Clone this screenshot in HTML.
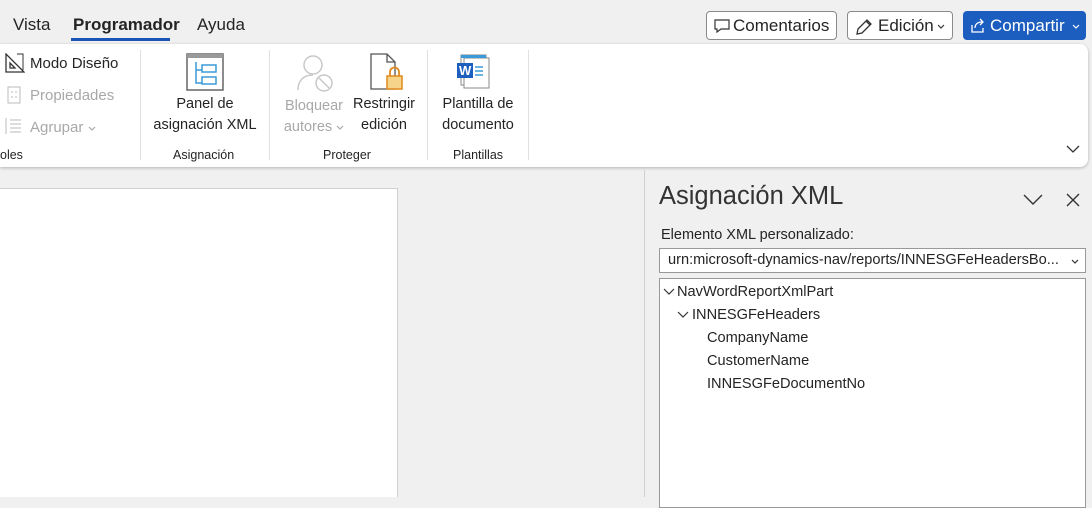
<!DOCTYPE html>
<html><head><style>
*{margin:0;padding:0;box-sizing:border-box}
body{width:1092px;height:497px;overflow:hidden;background:#f0f0f0;font-family:"Liberation Sans",sans-serif;color:#242424;position:relative}
.a{position:absolute;white-space:nowrap}
.tab{font-size:17px;top:15px}
.btn{position:absolute;top:11px;height:29px;border:1px solid #8a8a8a;border-radius:4px;background:#fff;font-size:17px;line-height:27px}
.rib{position:absolute;left:0;top:44px;width:1088px;height:123px;background:#fff;border-radius:0 8px 8px 0;box-shadow:0 1px 3px rgba(0,0,0,.25)}
.sep{position:absolute;top:6px;width:1px;height:110px;background:#e0e0e0}
.t{font-size:14.5px;text-align:center;line-height:21px}
.g{font-size:12.5px;top:104px}
.dis{color:#a8a8a8}
.cv{display:inline-block;vertical-align:middle;margin-left:3px}
</style></head><body>
<div class="a tab" style="left:13px">Vista</div>
<div class="a tab" style="left:73px;font-weight:bold">Programador</div>
<div class="a" style="left:71px;top:38px;width:99px;height:3px;background:#1a55b5"></div>
<div class="a tab" style="left:197px">Ayuda</div>

<div class="btn" style="left:706px;width:131px;padding-left:26px">Comentarios
<svg class="a" style="left:7px;top:7px" width="16" height="14"><path d="M1 1h14v9H7l-4 3v-3H1z" fill="none" stroke="#333" stroke-width="1.2"/></svg></div>
<div class="btn" style="left:847px;width:106px;padding-left:30px">Edición<svg class="cv" width="8" height="5"><path d="M1 1l3 3 3-3" fill="none" stroke="#333" stroke-width="1.2"/></svg>
<svg class="a" style="left:6px;top:5px" width="20" height="20"><path d="M3 17l1-5L13 3l4 4-9 9z M12 4l4 4" fill="none" stroke="#333" stroke-width="1.3"/></svg></div>
<div class="btn" style="left:963px;width:123px;padding-left:26px;background:#1b5ebf;border-color:#1b5ebf;color:#fff">Compartir<svg class="cv" style="margin-left:7px" width="8" height="5"><path d="M1 1l3 3 3-3" fill="none" stroke="#fff" stroke-width="1.2"/></svg>
<svg class="a" style="left:6px;top:6px" width="16" height="16"><path d="M2 7v7h11v-4 M5 10c0-4 3-6 7-6 M10 1l3 3-3 3" fill="none" stroke="#fff" stroke-width="1.3"/></svg></div>

<div class="rib">
<svg class="a" style="left:5px;top:9px" width="20" height="20"><path d="M1 1v18h18z M5 10v5h5z" fill="none" stroke="#333" stroke-width="1.3"/><path d="M12 1h6v16" fill="none" stroke="#333"/></svg>
<div class="a" style="left:30px;top:11px;font-size:15px">Modo Diseño</div>
<svg class="a" style="left:7px;top:42px" width="14" height="18"><rect x="1" y="1" width="12" height="16" fill="none" stroke="#bbb"/><path d="M4 6h2M8 6h2M4 11h2M8 11h2" stroke="#bbb"/></svg>
<div class="a dis" style="left:30px;top:43px;font-size:15px">Propiedades</div>
<svg class="a" style="left:5px;top:73px" width="18" height="18"><path d="M1 1v16M5 3h11M5 7h11M5 11h11M5 15h11" stroke="#bbb"/></svg>
<div class="a dis" style="left:30px;top:75px;font-size:15px">Agrupar<svg class="cv" style="margin-left:5px" width="8" height="5"><path d="M1 1l3 3 3-3" fill="none" stroke="#aaa" stroke-width="1.2"/></svg></div>
<div class="a g" style="left:0">oles</div>
<div class="sep" style="left:140px"></div>
<svg class="a" style="left:186px;top:9px" width="38" height="38"><rect x="1" y="1" width="36" height="36" fill="#fff" stroke="#666" stroke-width="1.5"/><rect x="1" y="1" width="36" height="4" fill="#999"/><path d="M10 9v21h6M10 17h6" fill="none" stroke="#3c9ad8" stroke-width="1.5"/><rect x="16" y="12" width="14" height="7" fill="none" stroke="#3c9ad8" stroke-width="1.5"/><rect x="16" y="24" width="14" height="7" fill="none" stroke="#3c9ad8" stroke-width="1.5"/></svg>
<div class="a t" style="left:146px;top:50px;width:118px">Panel de<br>asignación XML</div>
<div class="a g" style="left:173px">Asignación</div>
<div class="sep" style="left:269px"></div>
<svg class="a" style="left:296px;top:9px" width="40" height="40"><circle cx="17" cy="12" r="9" fill="none" stroke="#c8c8c8" stroke-width="1.5"/><path d="M2 37c0-10 6-15 15-15" fill="none" stroke="#c8c8c8" stroke-width="1.5"/><circle cx="28" cy="30" r="8" fill="none" stroke="#c8c8c8" stroke-width="1.5"/><path d="M23 25l10 10" stroke="#c8c8c8" stroke-width="1.5"/></svg>
<div class="a t dis" style="left:278px;top:52px;width:72px">Bloquear<br>autores<svg class="cv" style="margin-left:4px" width="8" height="5"><path d="M1 1l3 3 3-3" fill="none" stroke="#aaa" stroke-width="1.2"/></svg></div>
<svg class="a" style="left:368px;top:9px" width="40" height="40"><path d="M3 1h16l8 8v27H3z M19 1v8h8" fill="#fff" stroke="#555" stroke-width="1.3"/><rect x="19" y="23" width="15" height="13" fill="#f6d58a" stroke="#e08a1e" stroke-width="1.5"/><path d="M22 23v-4a4.5 4.5 0 0 1 9 0v4" fill="none" stroke="#e08a1e" stroke-width="1.8"/></svg>
<div class="a t" style="left:348px;top:50px;width:72px">Restringir<br>edición</div>
<div class="a g" style="left:323px">Proteger</div>
<div class="sep" style="left:427px"></div>
<svg class="a" style="left:455px;top:9px" width="40" height="40"><rect x="6" y="2" width="25" height="30" fill="#fff" stroke="#888"/><rect x="9" y="5" width="25" height="30" fill="#fff" stroke="#888"/><rect x="6" y="2" width="25" height="3" fill="#3c9ad8"/><rect x="2" y="10" width="16" height="15" fill="#1d5fbf"/><text x="4" y="22" font-size="13" font-weight="bold" fill="#fff" font-family="Liberation Sans">W</text><path d="M20 14h8M20 18h8M20 22h8" stroke="#3c9ad8" stroke-width="1.5"/></svg>
<div class="a t" style="left:434px;top:50px;width:88px">Plantilla de<br>documento</div>
<div class="a g" style="left:453px">Plantillas</div>
<div class="sep" style="left:528px"></div>
<svg class="a" style="left:1066px;top:101px" width="14" height="9"><path d="M1 1l6 6 6-6" fill="none" stroke="#333" stroke-width="1.3"/></svg>
</div>

<div class="a" style="left:0;top:188px;width:398px;height:309px;background:#fff;border-right:1px solid #d0d0d0;border-top:1px solid #d0d0d0"></div>
<div class="a" style="left:644px;top:170px;width:1px;height:327px;background:#d0d0d0"></div>

<div class="a" style="left:659px;top:182px;font-size:25.5px;color:#333">Asignación XML</div>
<svg class="a" style="left:1023px;top:194px" width="20" height="12"><path d="M1 1l9 9 9-9" fill="none" stroke="#333" stroke-width="1.4"/></svg>
<svg class="a" style="left:1066px;top:193px" width="14" height="14"><path d="M1 1l12 12M13 1L1 13" stroke="#333" stroke-width="1.4"/></svg>
<div class="a" style="left:661px;top:227px;font-size:14.5px">Elemento XML personalizado:</div>
<div class="a" style="left:659px;top:248px;width:427px;height:25px;background:#fff;border:1px solid #999;font-size:14.6px;line-height:23px;padding-left:8px">urn:microsoft-dynamics-nav/reports/INNESGFeHeadersBo...<svg class="a" style="right:6px;top:10px" width="8" height="5"><path d="M1 1l3 3 3-3" fill="none" stroke="#333" stroke-width="1.2"/></svg></div>
<div class="a" style="left:659px;top:278px;width:427px;height:230px;background:#fff;border:1px solid #999;font-size:14.6px">
<svg class="a" style="left:3px;top:9px" width="12" height="8"><path d="M1 1l5 5 5-5" fill="none" stroke="#333" stroke-width="1.2"/></svg>
<div class="a" style="left:17px;top:5px">NavWordReportXmlPart</div>
<svg class="a" style="left:17px;top:32px" width="12" height="8"><path d="M1 1l5 5 5-5" fill="none" stroke="#333" stroke-width="1.2"/></svg>
<div class="a" style="left:32px;top:28px">INNESGFeHeaders</div>
<div class="a" style="left:47px;top:51px">CompanyName</div>
<div class="a" style="left:47px;top:74px">CustomerName</div>
<div class="a" style="left:47px;top:97px">INNESGFeDocumentNo</div>
</div>
</body></html>
